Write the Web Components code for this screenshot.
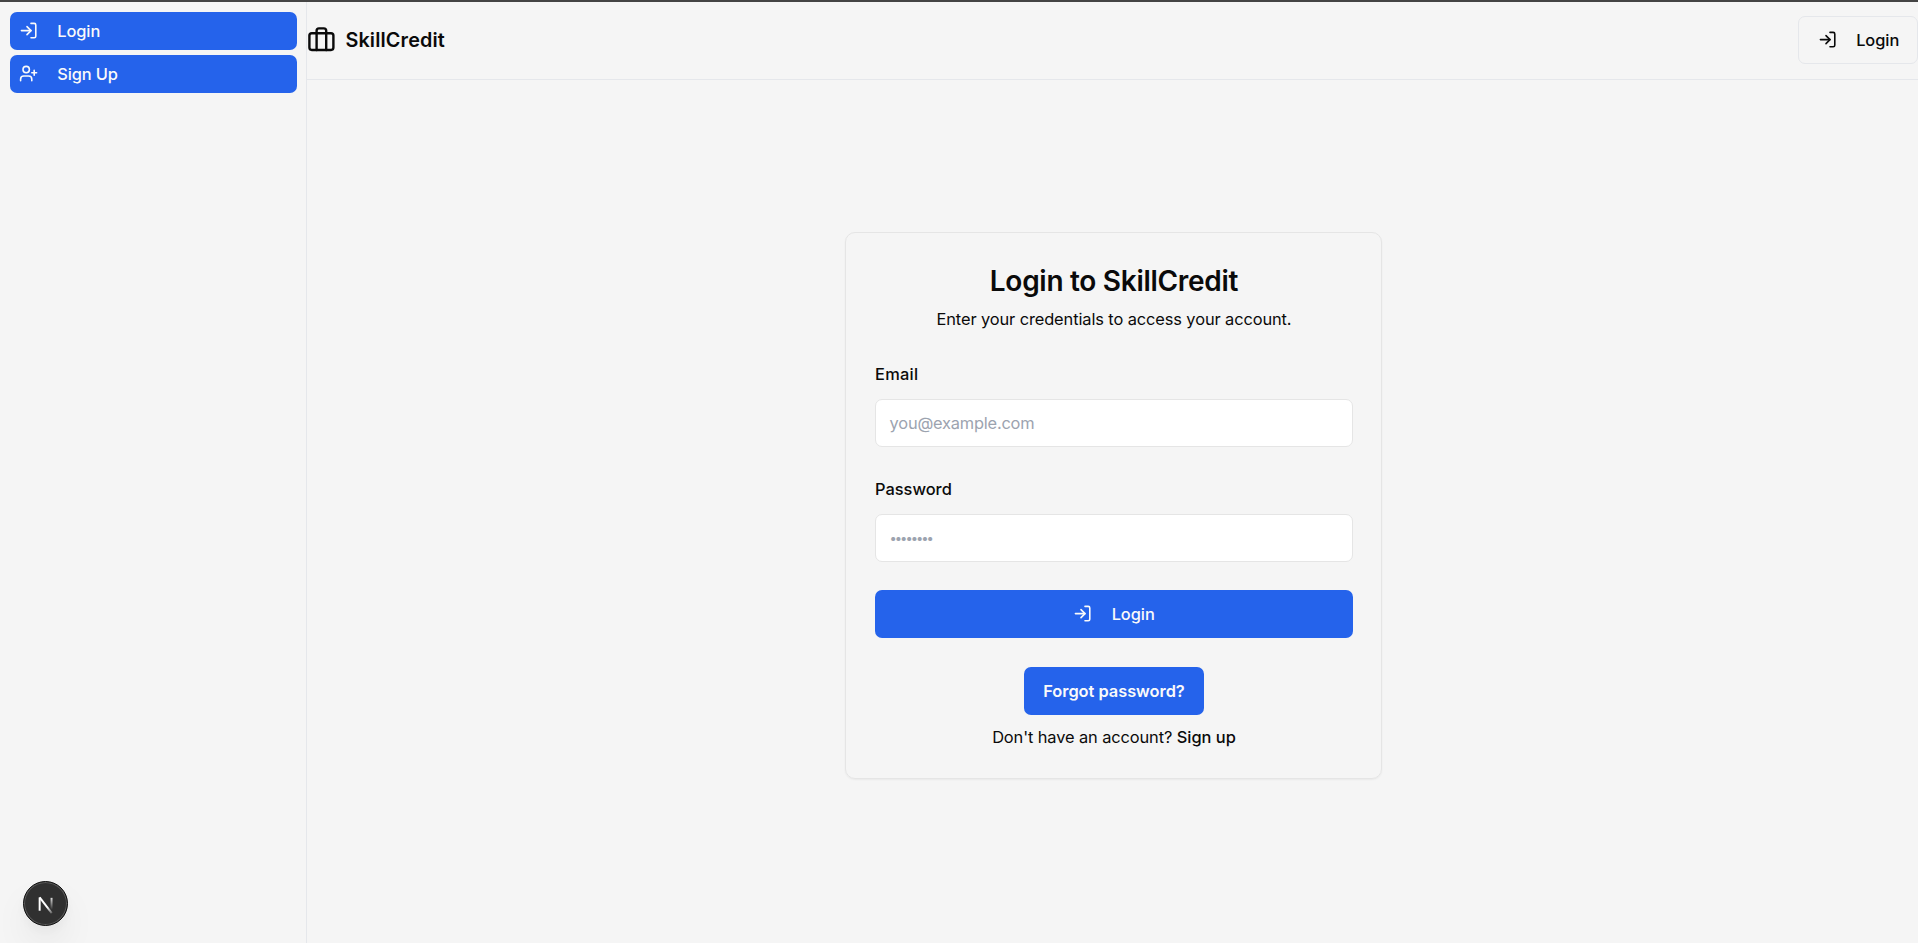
<!DOCTYPE html>
<html lang="en">
<head>
<meta charset="utf-8">
<title>SkillCredit</title>
<style>
html,body{margin:0;height:100%}
body{background:#f5f5f5;color:#0a0a0a;font:400 16.4px/24px Inter,"Liberation Sans",sans-serif;overflow:hidden}
</style>
</head>
<body>
<skill-app></skill-app>
<script>
const define = (tag, html) => customElements.define(tag, class extends HTMLElement {
  constructor() {
    super();
    const t = document.createElement('template');
    t.innerHTML = html;
    this.attachShadow({ mode: 'open' }).append(t.content.cloneNode(true));
  }
});

const ICONS = {
  login: '<path d="m10 17 5-5-5-5"/><path d="M15 12H3"/><path d="M15 3h4a2 2 0 0 1 2 2v14a2 2 0 0 1-2 2h-4"/>',
  userplus: '<path d="M16 21v-2a4 4 0 0 0-4-4H6a4 4 0 0 0-4 4v2"/><circle cx="9" cy="7" r="4"/><path d="M19 8v6"/><path d="M22 11h-6"/>',
  briefcase: '<path d="M16 20V4a2 2 0 0 0-2-2h-4a2 2 0 0 0-2 2v16"/><rect width="20" height="14" x="2" y="6" rx="2"/>'
};

customElements.define('ui-icon', class extends HTMLElement {
  connectedCallback() {
    if (this.shadowRoot) return;
    this.attachShadow({ mode: 'open' }).innerHTML = `<style>
      :host{display:block;flex:none;width:var(--size,19.2px);height:var(--size,19.2px)}
      svg{display:block;width:100%;height:100%;fill:none;stroke:currentColor;stroke-width:2;stroke-linecap:round;stroke-linejoin:round}
    </style><svg viewBox="0 0 24 24">${ICONS[this.getAttribute('name')]}</svg>`;
  }
});

define('ui-button', `<style>
  :host{display:flex;box-sizing:border-box;align-items:center;justify-content:center;gap:19.2px;height:48px;border-radius:7px;background:#2563eb;color:#fafafa;font-weight:500;letter-spacing:-.05px;white-space:nowrap}
  :host([variant=nav]){height:38px;justify-content:flex-start;gap:18.8px;padding-left:9.2px}
  :host([variant=outline]){background:transparent;color:#0a0a0a;border:1px solid #e5e7eb;width:120px;font-weight:450;padding-left:1px}
  :host([variant=link]){width:180px;font-weight:600;letter-spacing:-.03px}
</style><slot name="icon"></slot><slot></slot>`);

define('app-sidebar', `<style>
  :host{display:flex;flex-direction:column;gap:5px;box-sizing:border-box;width:307px;flex:none;padding:10px 9px 0 10px;border-right:1px solid #e5e7eb}
  .up{letter-spacing:-.12px}
</style>
<ui-button variant="nav"><ui-icon slot="icon" name="login"></ui-icon>Login</ui-button>
<ui-button variant="nav" class="up"><ui-icon slot="icon" name="userplus"></ui-icon>Sign Up</ui-button>`);

define('app-header', `<style>
  :host{display:flex;box-sizing:border-box;height:78px;align-items:flex-start;justify-content:space-between;padding-top:14px;border-bottom:1px solid #e5e7eb}
  .brand{display:flex;align-items:center;gap:9.6px;height:48px;--size:28.8px}
  .name{font-size:19.8px;font-weight:600;letter-spacing:.16px}
</style>
<div class="brand"><ui-icon name="briefcase"></ui-icon><span class="name">SkillCredit</span></div>
<ui-button variant="outline"><ui-icon slot="icon" name="login"></ui-icon>Login</ui-button>`);

define('form-field', `<style>
  :host{display:block}
  label{display:block;font-weight:480;letter-spacing:var(--track,0)}
  .box{display:flex;align-items:center;box-sizing:border-box;height:48px;margin-top:13px;padding:0 13.6px;border:1px solid #e5e5e5;border-radius:7px;background:#fff;color:#9ca3af}
  .box ::slotted(span){letter-spacing:-.2px}
  .box ::slotted(.dots){font-size:13px;letter-spacing:-2.05px}
</style><label><slot name="label"></slot></label><div class="box"><slot></slot></div>`);

define('login-card', `<style>
  :host{display:block;box-sizing:border-box;width:537px;height:547px;padding:31px 28px 0 29px;border:1px solid #e5e5e5;border-radius:10px;box-shadow:0 1px 2px rgba(0,0,0,.05)}
  h1{margin:0;font-size:28px;line-height:34px;font-weight:600;letter-spacing:-.29px;text-align:center}
  p{margin:9px 0 31px;text-align:center;letter-spacing:-.1px}
  .email{--track:.25px}
  .password{margin-top:30px}
  .submit{margin-top:28px}
  .foot{display:flex;flex-direction:column;align-items:center;gap:10px;margin-top:29px}
  .ask{letter-spacing:-.1px}
  b{font-weight:480;letter-spacing:0}
</style>
<h1>Login to SkillCredit</h1>
<p>Enter your credentials to access your account.</p>
<form-field class="email"><span slot="label">Email</span><span>you@example.com</span></form-field>
<form-field class="password"><span slot="label">Password</span><span class="dots">••••••••</span></form-field>
<ui-button class="submit"><ui-icon slot="icon" name="login"></ui-icon>Login</ui-button>
<div class="foot"><ui-button variant="link">Forgot password?</ui-button><div class="ask">Don't have an account? <b>Sign up</b></div></div>`);

define('dev-badge', `<style>
  :host{position:absolute;left:22.5px;top:880.6px;width:45.6px;height:45.6px;border-radius:50%;box-sizing:border-box;background:#303030;border:1px solid #111;box-shadow:inset 0 0 0 1px #5a5a5a,0 19px 38px -8px rgba(0,0,0,.13),0 5px 10px rgba(0,0,0,.03)}
  svg{display:block;width:100%;height:100%}
</style>
<svg viewBox="0 0 44 44" fill="none" stroke-width="2">
  <defs>
    <linearGradient id="d" gradientUnits="userSpaceOnUse" x1="24" y1="25" x2="29" y2="32"><stop stop-color="#fff"/><stop offset="1" stop-color="#fff" stop-opacity=".15"/></linearGradient>
    <linearGradient id="v" gradientUnits="userSpaceOnUse" x1="28" y1="15" x2="28" y2="28"><stop stop-color="#fff" stop-opacity=".9"/><stop offset="1" stop-color="#fff" stop-opacity="0"/></linearGradient>
  </defs>
  <path d="M15.8 29V15.6" stroke="#fff"/>
  <path d="M15.8 15.6 28 31.5" stroke="url(#d)"/>
  <path d="M27.8 16v12" stroke="url(#v)"/>
</svg>`);

define('skill-app', `<style>
  :host{display:flex;flex-direction:column;height:943px;position:relative;overflow:hidden}
  .strip{flex:none;height:2px;background:#444}
  .body{display:flex;flex:1}
  .main{flex:1;min-width:0}
  .center{display:flex;justify-content:center;padding:152px 0 0 2px}
</style>
<div class="strip"></div>
<div class="body"><app-sidebar></app-sidebar>
<div class="main"><app-header></app-header><div class="center"><login-card></login-card></div></div></div>
<dev-badge></dev-badge>`);
</script>
</body>
</html>
